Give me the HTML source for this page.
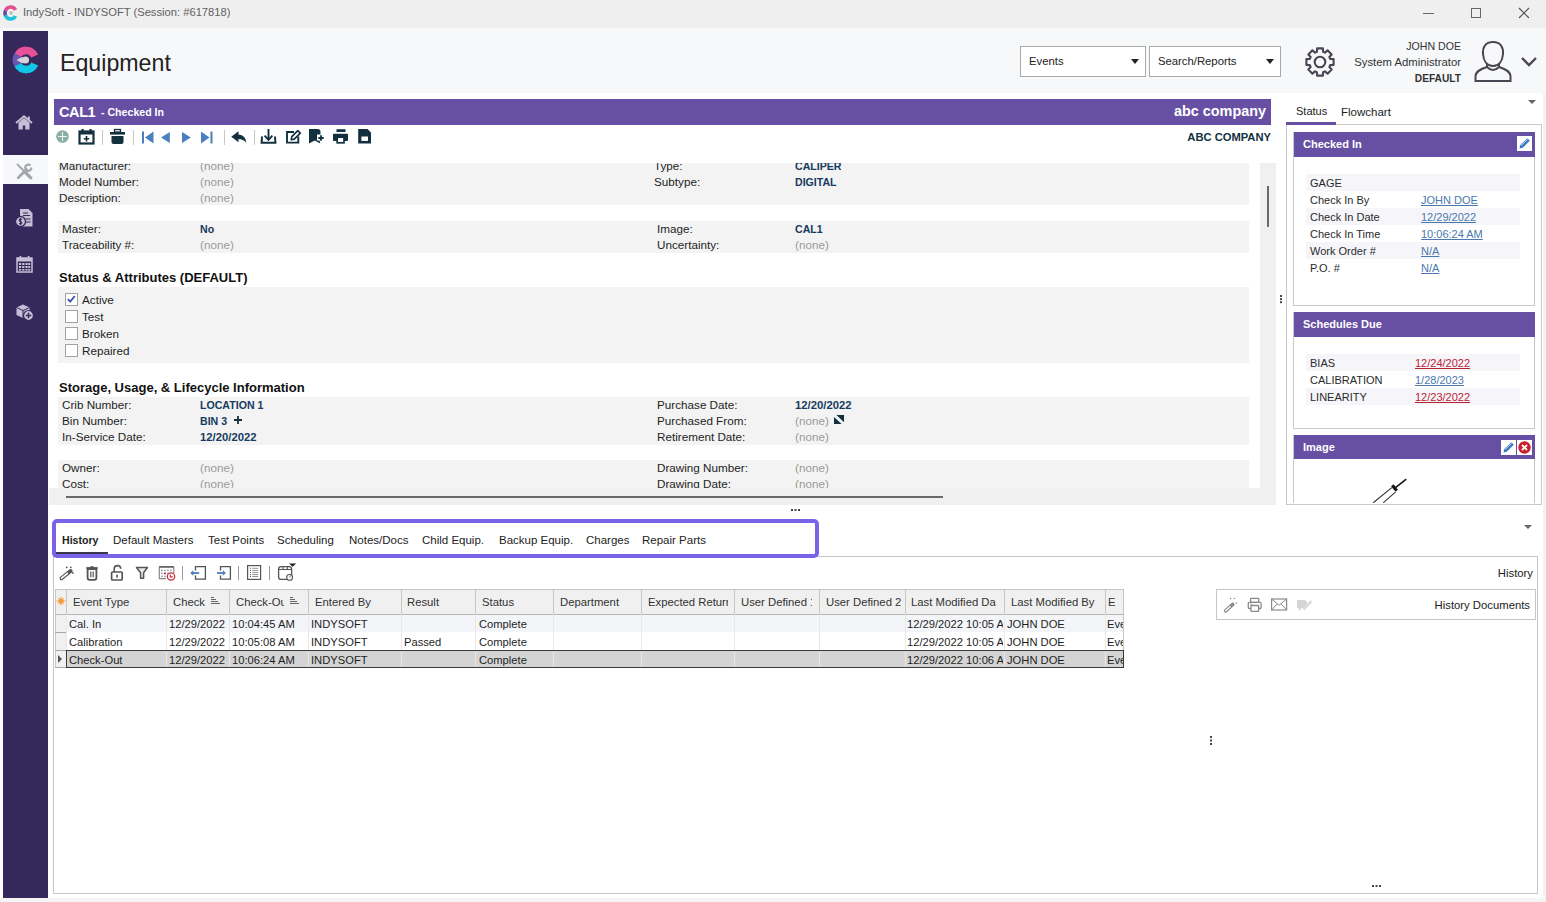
<!DOCTYPE html>
<html><head><meta charset="utf-8">
<style>
*{box-sizing:border-box;margin:0;padding:0}
html,body{width:1546px;height:902px;overflow:hidden;background:#fff;font-family:"Liberation Sans",sans-serif;font-size:12px;color:#1e1e1e;letter-spacing:0}
.a{position:absolute;white-space:nowrap}
.dd{background:#fff;border:1px solid #a9a9a9;height:31px}
.dd span{position:absolute;left:8px;top:7.5px;font-size:11.3px;color:#222}
.dd i{position:absolute;right:6px;top:12px;width:0;height:0;border-left:4px solid transparent;border-right:4px solid transparent;border-top:5px solid #222}
.lbl{color:#1e1e1e;font-size:11.7px}
.none{color:#9a9a9a;font-size:11.7px}
.val{color:#173a5e;font-weight:bold;letter-spacing:0;font-size:10.6px;margin-top:1px}
.gbox{background:#f3f3f3}
.dt{font-size:11.3px;margin-top:0.5px}
.cb{width:13px;height:13px;border:1px solid #a2a2a2;background:#fff}
.card{border:1px solid #c9c9c9;background:#fff}
.ch{background:#6750a4;color:#fff;font-weight:bold}
.lk{color:#4a78ae;text-decoration:underline}
.lr{color:#b82230;text-decoration:underline}
.band{background:#f4f5f9}
.gh{color:#333;font-size:11.3px}
.gt{color:#1e1e1e;font-size:11.2px}
</style></head><body>
<div class="a" style="left:0px;top:0px;width:1546px;height:28px;background:#efefef"></div>
<svg class="a" style="left:2px;top:5px" width="16" height="16" viewBox="0 0 16 16">
<path d="M3.5 5.5 A5.5 5.5 0 0 1 13.5 5" stroke="#e0508f" stroke-width="3.6" fill="none"/>
<path d="M3.5 10.5 A5.5 5.5 0 0 1 3.5 5.5" stroke="#5d4a9e" stroke-width="3.6" fill="none"/>
<path d="M13.5 11 A5.5 5.5 0 0 1 3.5 10.5" stroke="#1ec0dc" stroke-width="3.6" fill="none"/>
<circle cx="9" cy="8" r="1.8" fill="#b8b8b8"/></svg>
<div class="a " style="left:23px;top:6px;font-size:11.2px;color:#5f5f5f">IndySoft - INDYSOFT (Session: #617818)</div>
<div class="a" style="left:1423px;top:13px;width:11px;height:1px;background:#666"></div>
<div class="a" style="left:1471px;top:8px;width:10px;height:10px;border:1px solid #666"></div>
<svg class="a" style="left:1518px;top:7px" width="12" height="12" viewBox="0 0 12 12"><path d="M1 1L11 11M11 1L1 11" stroke="#555" stroke-width="1.2"/></svg>
<div class="a" style="left:3px;top:31px;width:45px;height:868px;background:#35295b"></div>
<div class="a" style="left:3px;top:155px;width:45px;height:29px;background:#f7f8fa"></div>
<svg class="a" style="left:12px;top:46px" width="28" height="28" viewBox="0 0 28 28">
<path d="M5.77 9.25 A9.5 9.5 0 0 1 22.7 10" stroke="#e8509a" stroke-width="7.6" fill="none"/>
<path d="M5.77 18.75 A9.5 9.5 0 0 1 5.77 9.25" stroke="#6a55b0" stroke-width="7.6" fill="none"/>
<path d="M22.7 18 A9.5 9.5 0 0 1 5.77 18.75" stroke="#12c6e8" stroke-width="7.6" fill="none"/>
<path d="M4.5 14 Q9 10.4 13.5 10.4 A3.6 3.6 0 0 1 13.5 17.6 Q9 17.6 4.5 14Z" fill="#d6d2da"/></svg>
<svg class="a" style="left:15px;top:115px" width="18" height="15" viewBox="0 0 18 15">
<path d="M1 8 L9 1.2 L17 8" fill="none" stroke="#c4bfd6" stroke-width="1.8" stroke-linejoin="miter"/>
<path d="M3.5 7.5 L9 3 L14.5 7.5 V14.5 H10.2 V10.5 H7.8 V14.5 H3.5Z" fill="#c4bfd6"/>
<rect x="12.8" y="1.5" width="2" height="4" fill="#c4bfd6"/></svg>
<svg class="a" style="left:16px;top:163px" width="17" height="17" viewBox="0 0 17 17">
<path d="M1.5 1.5 L9 9" stroke="#a6a6ae" stroke-width="1.8" stroke-linecap="round"/>
<path d="M9.5 9.5 L14.8 14.8" stroke="#a6a6ae" stroke-width="3.2" stroke-linecap="round"/>
<path d="M2.2 14.8 L10.5 6.5" stroke="#a6a6ae" stroke-width="2.8" stroke-linecap="round"/>
<circle cx="12.3" cy="4.7" r="3.1" fill="none" stroke="#a6a6ae" stroke-width="2.2"/>
<path d="M12.5 4.5 L17 0 V4.5 Z" fill="#f7f8fa"/></svg>
<svg class="a" style="left:15px;top:208px" width="19" height="20" viewBox="0 0 19 20">
<path d="M5 1 H13.5 L17.5 5 V18.5 H5 Z" fill="#c4bfd6"/>
<path d="M8 5 H13 M8 7.5 H15 M10.5 11 H15.5 M10.5 14 H15.5" stroke="#372a5b" stroke-width="1.1"/>
<circle cx="5.5" cy="13.5" r="5" fill="#c4bfd6" stroke="#372a5b" stroke-width="1.3"/>
<path d="M7 11.5 Q5.5 10.5 4.3 11.5 Q3.7 12.8 5.5 13.4 Q7.3 14 6.7 15.3 Q5.5 16.4 4 15.4 M5.5 10 V17" fill="none" stroke="#372a5b" stroke-width="1.1"/></svg>
<svg class="a" style="left:16px;top:255px" width="17" height="18" viewBox="0 0 17 18">
<rect x="1" y="3" width="15" height="14" fill="none" stroke="#c4bfd6" stroke-width="1.5"/>
<rect x="1" y="3" width="15" height="3.5" fill="#c4bfd6"/>
<rect x="3.5" y="1" width="1.8" height="3" fill="#c4bfd6"/><rect x="11.7" y="1" width="1.8" height="3" fill="#c4bfd6"/>
<g fill="#c4bfd6"><rect x="3" y="8" width="2.2" height="2"/><rect x="6.2" y="8" width="2.2" height="2"/><rect x="9.4" y="8" width="2.2" height="2"/><rect x="12.2" y="8" width="2" height="2"/>
<rect x="3" y="11" width="2.2" height="2"/><rect x="6.2" y="11" width="2.2" height="2"/><rect x="9.4" y="11" width="2.2" height="2"/><rect x="12.2" y="11" width="2" height="2"/>
<rect x="3" y="14" width="2.2" height="1.6"/><rect x="6.2" y="14" width="2.2" height="1.6"/><rect x="9.4" y="14" width="2.2" height="1.6"/><rect x="12.2" y="14" width="2" height="1.6"/></g></svg>
<svg class="a" style="left:15px;top:303px" width="19" height="18" viewBox="0 0 19 18">
<path d="M1.5 4.5 L8 1.5 L14.5 4.5 L14.5 12 L8 15 L1.5 12Z" fill="#c4bfd6"/>
<path d="M1.5 4.5 L8 7.5 L14.5 4.5 M8 7.5 V15" fill="none" stroke="#372a5b" stroke-width="1"/>
<circle cx="13.5" cy="12.5" r="5" fill="#c4bfd6" stroke="#372a5b" stroke-width="1.2"/>
<path d="M13.5 9.8 V15.2 M10.8 12.5 H16.2" stroke="#372a5b" stroke-width="1.5"/></svg>
<div class="a" style="left:48px;top:31px;width:1498px;height:62px;background:#f7f8fa"></div>
<div class="a " style="left:60px;top:50px;font-size:23.2px;color:#222;letter-spacing:0">Equipment</div>
<div class="a dd" style="left:1020px;top:46px;width:126px"><span>Events</span><i></i></div>
<div class="a dd" style="left:1149px;top:46px;width:132px"><span>Search/Reports</span><i></i></div>
<svg class="a" style="left:1304px;top:46px" width="32" height="32" viewBox="0 0 32 32">
<path d="M26.14 12.90 L29.60 13.11 L29.60 18.89 L26.14 19.10 L25.36 20.98 L27.66 23.57 L23.57 27.66 L20.98 25.36 L19.10 26.14 L18.89 29.60 L13.11 29.60 L12.90 26.14 L11.02 25.36 L8.43 27.66 L4.34 23.57 L6.64 20.98 L5.86 19.10 L2.40 18.89 L2.40 13.11 L5.86 12.90 L6.64 11.02 L4.34 8.43 L8.43 4.34 L11.02 6.64 L12.90 5.86 L13.11 2.40 L18.89 2.40 L19.10 5.86 L20.98 6.64 L23.57 4.34 L27.66 8.43 L25.36 11.02Z" fill="none" stroke="#4a4552" stroke-width="2.1" stroke-linejoin="round"/>
<circle cx="16" cy="16" r="5.3" fill="none" stroke="#4a4552" stroke-width="2.1"/></svg>
<div class="a" style="right:85px;top:38px;text-align:right;line-height:16px;color:#333;font-size:11.3px;letter-spacing:0"><span style="font-size:10.6px">JOHN DOE</span><br>System Administrator<br><b style="letter-spacing:0;font-size:10.2px">DEFAULT</b></div>
<svg class="a" style="left:1473px;top:40px" width="40" height="43" viewBox="0 0 40 43">
<path d="M20 2 C12 2 9.5 8 10 14 C10.5 21 14 26 20 26 C26 26 29.5 21 30 14 C30.5 8 28 2 20 2Z" fill="none" stroke="#4a4552" stroke-width="2"/>
<path d="M14 24 L14 27 C8 29 3 31 2.5 36 L2.5 41 H37.5 V36 C37 31 32 29 26 27 L26 24" fill="none" stroke="#4a4552" stroke-width="2"/>
<path d="M14 27 Q20 33 26 27" fill="none" stroke="#4a4552" stroke-width="2"/></svg>
<svg class="a" style="left:1520px;top:56px" width="18" height="11" viewBox="0 0 18 11"><path d="M2 2 L9 9 L16 2" fill="none" stroke="#4a4552" stroke-width="2.4"/></svg>
<div class="a" style="left:54px;top:99px;width:1217px;height:26px;background:#6750a4"></div>
<div class="a " style="left:59px;top:104px;font-size:14.5px;font-weight:bold;color:#fff;letter-spacing:-0.4px">CAL1</div>
<div class="a " style="left:101px;top:106px;font-size:10.6px;font-weight:bold;color:#fff;letter-spacing:0">- Checked In</div>
<div class="a" style="right:280px;top:103px;font-size:14.4px;font-weight:bold;color:#fff;letter-spacing:0">abc company</div>
<div class="a" style="right:275px;top:131px;font-size:11.2px;font-weight:bold;color:#13303f;letter-spacing:0">ABC COMPANY</div>
<svg class="a" style="left:54px;top:127px" width="330" height="20" viewBox="0 0 330 20">
<circle cx="8.5" cy="9.5" r="6.3" fill="#8aaea3"/><path d="M8.5 5 V14 M4 9.5 H13" stroke="#eef3f1" stroke-width="1.1"/>
<rect x="25.5" y="4.5" width="14" height="12" fill="none" stroke="#13303f" stroke-width="2.2"/><rect x="25" y="4" width="15" height="3.5" fill="#13303f"/>
<rect x="27.5" y="2" width="2.2" height="3" fill="#13303f"/><rect x="35.5" y="2" width="2.2" height="3" fill="#13303f"/>
<path d="M32.5 9 V14.5 M29.8 11.8 H35.2" stroke="#13303f" stroke-width="1.6"/>
<rect x="48" y="3" width="1" height="15" fill="#c8c8c8"/>
<rect x="56" y="5" width="15" height="2.6" fill="#13303f"/><rect x="60.5" y="2.5" width="6" height="2.5" fill="none" stroke="#13303f" stroke-width="1.3"/>
<path d="M57.5 9 H69.5 V15 Q69.5 17 67.5 17 H59.5 Q57.5 17 57.5 15Z" fill="#13303f"/>
<rect x="79" y="3" width="1" height="15" fill="#c8c8c8"/>
<rect x="88" y="4.5" width="2" height="12" fill="#4a7fc0"/><path d="M99.5 4.5 V16.5 L91 10.5Z" fill="#4a7fc0"/>
<path d="M115.8 5 V16 L107 10.5Z" fill="#4a7fc0"/>
<path d="M128 5 V16 L136.8 10.5Z" fill="#4a7fc0"/>
<path d="M147 4.5 V16.5 L155.5 10.5Z" fill="#4a7fc0"/><rect x="156.5" y="4.5" width="2" height="12" fill="#4a7fc0"/>
<rect x="170" y="3" width="1" height="15" fill="#c8c8c8"/>
<path d="M177.3 9.8 L184.5 4.3 V7.6 Q191.8 8.3 192.4 15.8 Q189 12.2 184.5 12.1 V15.3 Z" fill="#13303f"/>
<rect x="200" y="3" width="1" height="15" fill="#c8c8c8"/>
<path d="M208 9.5 L207.6 15.8 H221.4 L221 9.5" fill="none" stroke="#13303f" stroke-width="2"/><path d="M214.5 2 V12.5" fill="none" stroke="#13303f" stroke-width="1.9"/><path d="M210.6 8.6 L214.5 12.8 L218.4 8.6" fill="none" stroke="#13303f" stroke-width="1.9"/>
<path d="M240 5 H233 V15.6 H244.3 V9.5" fill="none" stroke="#13303f" stroke-width="1.9"/><path d="M237.2 12.8 L237.8 9.6 L243.8 3.6 L246.3 6.1 L240.3 12.1Z" fill="none" stroke="#13303f" stroke-width="1.6" stroke-linejoin="round"/>
<path d="M255 2 H263.5 Q266.5 2 266.5 5 V7.5 H263 V13.5 H265.5 L266.3 16.6 L260.8 13.5 L255 16.6 Z" fill="#13303f"/><path d="M267 8.3 V13.7 M264.3 11 H269.7" stroke="#13303f" stroke-width="1.8"/>
<rect x="282.5" y="2.2" width="9" height="2.8" fill="#13303f"/><rect x="279" y="6.8" width="15" height="7.2" rx="0.8" fill="#13303f"/><rect x="283.2" y="10.2" width="6.8" height="5.6" fill="#fff" stroke="#13303f" stroke-width="1.7"/>
<path d="M304.2 2 H313.5 L317 5.5 V16.6 H304.2 Z" fill="#13303f"/><rect x="307.4" y="9.5" width="6.6" height="4.4" fill="#fff"/>
</svg>
<div class="a" style="left:54px;top:163px;width:1206px;height:325px;overflow:hidden">
<div class="a gbox" style="left:4px;top:-13px;width:1191px;height:55px"></div>
<div class="a gbox" style="left:4px;top:58px;width:1191px;height:32px"></div>
<div class="a gbox" style="left:4px;top:124px;width:1191px;height:76px"></div>
<div class="a gbox" style="left:4px;top:234px;width:1191px;height:48px"></div>
<div class="a gbox" style="left:4px;top:297px;width:1191px;height:40px"></div>
<div class="a lbl" style="left:5px;top:-4px">Manufacturer:</div>
<div class="a none" style="left:146px;top:-4px">(none)</div>
<div class="a lbl" style="left:600px;top:-4px">Type:</div>
<div class="a val" style="left:741px;top:-4px">CALIPER</div>
<div class="a lbl" style="left:5px;top:12px">Model Number:</div>
<div class="a none" style="left:146px;top:12px">(none)</div>
<div class="a lbl" style="left:600px;top:12px">Subtype:</div>
<div class="a val" style="left:741px;top:12px">DIGITAL</div>
<div class="a lbl" style="left:5px;top:28px">Description:</div>
<div class="a none" style="left:146px;top:28px">(none)</div>
<div class="a lbl" style="left:8px;top:59px">Master:</div>
<div class="a val" style="left:146px;top:59px">No</div>
<div class="a lbl" style="left:603px;top:59px">Image:</div>
<div class="a val" style="left:741px;top:59px">CAL1</div>
<div class="a lbl" style="left:8px;top:75px">Traceability #:</div>
<div class="a none" style="left:146px;top:75px">(none)</div>
<div class="a lbl" style="left:603px;top:75px">Uncertainty:</div>
<div class="a none" style="left:741px;top:75px">(none)</div>
<div class="a" style="left:5px;top:107px;font-size:13px;font-weight:bold;color:#111;letter-spacing:0">Status &amp; Attributes (DEFAULT)</div>
<div class="a cb" style="left:11px;top:130px"></div>
<svg class="a" style="left:11px;top:130px" width="12" height="12" viewBox="0 0 12 12"><path d="M2.8 6.2 L5.2 8.6 L9.8 3" fill="none" stroke="#3d55a8" stroke-width="1.8"/></svg>
<div class="a lbl" style="left:28px;top:130.2px">Active</div>
<div class="a cb" style="left:11px;top:147px"></div>
<div class="a lbl" style="left:28px;top:147.2px">Test</div>
<div class="a cb" style="left:11px;top:164px"></div>
<div class="a lbl" style="left:28px;top:164.2px">Broken</div>
<div class="a cb" style="left:11px;top:181px"></div>
<div class="a lbl" style="left:28px;top:181.2px">Repaired</div>
<div class="a" style="left:5px;top:217px;font-size:13px;font-weight:bold;color:#111;letter-spacing:0">Storage, Usage, &amp; Lifecycle Information</div>
<div class="a lbl" style="left:8px;top:235px">Crib Number:</div>
<div class="a val" style="left:146px;top:235px">LOCATION 1</div>
<div class="a lbl" style="left:603px;top:235px">Purchase Date:</div>
<div class="a val dt" style="left:741px;top:235px">12/20/2022</div>
<div class="a lbl" style="left:8px;top:251px">Bin Number:</div>
<div class="a val" style="left:146px;top:251px">BIN 3</div>
<div class="a lbl" style="left:603px;top:251px">Purchased From:</div>
<div class="a none" style="left:741px;top:251px">(none)</div>
<div class="a lbl" style="left:8px;top:267px">In-Service Date:</div>
<div class="a val dt" style="left:146px;top:267px">12/20/2022</div>
<div class="a lbl" style="left:603px;top:267px">Retirement Date:</div>
<div class="a none" style="left:741px;top:267px">(none)</div>
<div class="a lbl" style="left:8px;top:298px">Owner:</div>
<div class="a none" style="left:146px;top:298px">(none)</div>
<div class="a lbl" style="left:603px;top:298px">Drawing Number:</div>
<div class="a none" style="left:741px;top:298px">(none)</div>
<div class="a lbl" style="left:8px;top:314px">Cost:</div>
<div class="a none" style="left:146px;top:314px">(none)</div>
<div class="a lbl" style="left:603px;top:314px">Drawing Date:</div>
<div class="a none" style="left:741px;top:314px">(none)</div>
<svg class="a" style="left:179px;top:252px" width="10" height="10" viewBox="0 0 10 10"><path d="M5 1 V9 M1 5 H9" stroke="#13303f" stroke-width="1.8"/></svg>
<svg class="a" style="left:780px;top:252px" width="10" height="9" viewBox="0 0 10 9"><path d="M2.4 0 H10 V7.2Z M0 2 V9 H7.6Z" fill="#13303f"/></svg>
</div>
<div class="a" style="left:1260px;top:163px;width:16px;height:325px;background:#f0f0f0"></div>
<div class="a" style="left:1267px;top:186px;width:2px;height:41px;background:#6a6a6a"></div>
<div class="a" style="left:49px;top:488px;width:1227px;height:17px;background:#f0f0f0"></div>
<div class="a" style="left:66px;top:496px;width:877px;height:2px;background:#6a6a6a"></div>
<svg class="a" style="left:791px;top:509px" width="9" height="2"><rect x="0" y="0" width="2" height="2" fill="#444"/><rect x="3.5" y="0" width="2" height="2" fill="#444"/><rect x="7" y="0" width="2" height="2" fill="#444"/></svg>
<svg class="a" style="left:1280px;top:295px" width="3" height="9"><rect x="0" y="0" width="2" height="2" fill="#4a4a4a"/><rect x="0" y="3.1" width="2" height="2" fill="#4a4a4a"/><rect x="0" y="6.2" width="2" height="2" fill="#4a4a4a"/></svg>
<div class="a" style="left:1543px;top:93px;width:3px;height:809px;background:#f3f3f3"></div>
<div class="a" style="left:1286px;top:124px;width:256px;height:381px;border:1px solid #c9c9c9;border-top-color:#c9c9c9"></div>
<div class="a" style="left:1286px;top:122px;width:50px;height:3px;background:#6750a4"></div>
<div class="a " style="left:1296px;top:105px;font-size:11px;color:#222">Status</div>
<div class="a " style="left:1341px;top:106px;font-size:11.5px;color:#222">Flowchart</div>
<div class="a" style="left:1528px;top:100px;width:0;height:0;border-left:4px solid transparent;border-right:4px solid transparent;border-top:4px solid #666"></div>
<div class="a" style="left:1293px;top:304px"></div>
<div class="a card" style="left:1293px;top:132px;width:242px;height:174px"></div>
<div class="a" style="left:1294px;top:132px;width:241px;height:25px;background:#6750a4"></div>
<div class="a " style="left:1303px;top:138px;font-size:11px;font-weight:bold;color:#fff;letter-spacing:0">Checked In</div>
<div class="a card" style="left:1293px;top:312px;width:242px;height:117px"></div>
<div class="a" style="left:1294px;top:312px;width:241px;height:25px;background:#6750a4"></div>
<div class="a " style="left:1303px;top:318px;font-size:11px;font-weight:bold;color:#fff;letter-spacing:0">Schedules Due</div>
<div class="a" style="left:1286px;top:424px;width:256px;height:79px;overflow:hidden">
<div class="a card" style="left:7px;top:11px;width:242px;height:100px"></div>
<div class="a" style="left:8px;top:11px;width:241px;height:24px;background:#6750a4"></div>
<div class="a " style="left:17px;top:17px;font-size:11px;font-weight:bold;color:#fff">Image</div>
<svg class="a" style="left:86px;top:54px" width="36" height="26" viewBox="0 0 36 26"><path d="M1.2 24.8 L19.8 9.6 M11.2 24.8 L23.4 14.2" stroke="#333" stroke-width="1.1" fill="none"/><path d="M20.3 7.3 L24.7 12.7" stroke="#151515" stroke-width="3.2"/><path d="M23.5 9.6 L34.3 1.2" stroke="#151515" stroke-width="1.6"/></svg>
</div>
<svg class="a" style="left:1517px;top:136px" width="15" height="15" viewBox="0 0 15 15"><rect width="15" height="15" fill="#fff"/><path d="M2.5 12.5 L3.2 9.3 L10.3 2.2 L12.8 4.7 L5.7 11.8Z" fill="#3a78c2"/><path d="M4.2 9.6 L10.6 3.2" stroke="#fff" stroke-width="0.7"/></svg>
<svg class="a" style="left:1501px;top:440px" width="15" height="15" viewBox="0 0 15 15"><rect width="15" height="15" fill="#fff"/><path d="M2.5 12.5 L3.2 9.3 L10.3 2.2 L12.8 4.7 L5.7 11.8Z" fill="#3a78c2"/><path d="M4.2 9.6 L10.6 3.2" stroke="#fff" stroke-width="0.7"/></svg>
<svg class="a" style="left:1517px;top:440px" width="15" height="15" viewBox="0 0 15 15"><rect width="15" height="15" fill="#fff"/><circle cx="7.5" cy="7.5" r="6.2" fill="#c8202a"/><path d="M5 5 L10 10 M10 5 L5 10" stroke="#fff" stroke-width="1.8"/></svg>
<div class="a" style="left:1306px;top:174px;width:214px;height:17px;background:#f6f6fa"></div>
<div class="a " style="left:1310px;top:176.5px;font-size:11px;color:#2a2a2a">GAGE</div>
<div class="a " style="left:1310px;top:193.5px;font-size:11px;color:#2a2a2a">Check In By</div>
<div class="a lk" style="left:1421px;top:193.5px;font-size:11px">JOHN DOE</div>
<div class="a" style="left:1306px;top:208px;width:214px;height:17px;background:#f6f6fa"></div>
<div class="a " style="left:1310px;top:210.5px;font-size:11px;color:#2a2a2a">Check In Date</div>
<div class="a lk" style="left:1421px;top:210.5px;font-size:11px">12/29/2022</div>
<div class="a " style="left:1310px;top:227.5px;font-size:11px;color:#2a2a2a">Check In Time</div>
<div class="a lk" style="left:1421px;top:227.5px;font-size:11px">10:06:24 AM</div>
<div class="a" style="left:1306px;top:242px;width:214px;height:17px;background:#f6f6fa"></div>
<div class="a " style="left:1310px;top:244.5px;font-size:11px;color:#2a2a2a">Work Order #</div>
<div class="a lk" style="left:1421px;top:244.5px;font-size:11px">N/A</div>
<div class="a " style="left:1310px;top:261.5px;font-size:11px;color:#2a2a2a">P.O. #</div>
<div class="a lk" style="left:1421px;top:261.5px;font-size:11px">N/A</div>
<div class="a" style="left:1306px;top:354px;width:214px;height:17px;background:#f6f6fa"></div>
<div class="a " style="left:1310px;top:356.5px;font-size:11px;color:#2a2a2a">BIAS</div>
<div class="a lr" style="left:1415px;top:356.5px;font-size:11px">12/24/2022</div>
<div class="a " style="left:1310px;top:373.5px;font-size:11px;color:#2a2a2a">CALIBRATION</div>
<div class="a lk" style="left:1415px;top:373.5px;font-size:11px">1/28/2023</div>
<div class="a" style="left:1306px;top:388px;width:214px;height:17px;background:#f6f6fa"></div>
<div class="a " style="left:1310px;top:390.5px;font-size:11px;color:#2a2a2a">LINEARITY</div>
<div class="a lr" style="left:1415px;top:390.5px;font-size:11px">12/23/2022</div>
<div class="a" style="left:1524px;top:525px;width:0;height:0;border-left:4px solid transparent;border-right:4px solid transparent;border-top:4px solid #666"></div>
<div class="a" style="left:53px;top:556px;width:1485px;height:338px;border:1px solid #c6c6c6"></div>
<div class="a" style="left:52px;top:519px;width:767px;height:39px;border:4px solid #7a63e6;border-radius:5px;background:#fff"></div>
<div class="a" style="left:56px;top:552px;width:52px;height:2px;background:#3b3650"></div>
<div class="a " style="left:62px;top:534px;font-size:10.6px;font-weight:bold;color:#222">History</div>
<div class="a " style="left:113px;top:534px;font-size:11.5px;color:#222">Default Masters</div>
<div class="a " style="left:208px;top:534px;font-size:11.5px;color:#222">Test Points</div>
<div class="a " style="left:277px;top:534px;font-size:11.5px;color:#222">Scheduling</div>
<div class="a " style="left:349px;top:534px;font-size:11.5px;color:#222">Notes/Docs</div>
<div class="a " style="left:422px;top:534px;font-size:11.5px;color:#222">Child Equip.</div>
<div class="a " style="left:499px;top:534px;font-size:11.5px;color:#222">Backup Equip.</div>
<div class="a " style="left:586px;top:534px;font-size:11.5px;color:#222">Charges</div>
<div class="a " style="left:642px;top:534px;font-size:11.5px;color:#222">Repair Parts</div>
<div class="a " style="left:1492px;top:566.5px;font-size:11.3px;color:#222;right:13px;left:auto">History</div>
<svg class="a" style="left:56px;top:563px" width="245" height="20" viewBox="0 0 245 20">
<path d="M5.5 15.2 L14.6 8" stroke="#555" stroke-width="4" stroke-linecap="round"/><path d="M5.5 15.2 L11.5 10.4" stroke="#fff" stroke-width="1.6" stroke-linecap="round"/>
<circle cx="10.7" cy="4.3" r="0.9" fill="#555"/><circle cx="14.8" cy="4.3" r="0.9" fill="#555"/><circle cx="16.9" cy="9.9" r="0.9" fill="#555"/>
<path d="M30.3 5 H41.7" stroke="#555" stroke-width="1.8"/><path d="M33.8 5 Q34.2 3 36 3 Q37.8 3 38.2 5" fill="#555"/>
<path d="M31.6 6 H40.4 V14.8 Q40.4 16.8 38.4 16.8 H33.6 Q31.6 16.8 31.6 14.8Z" fill="none" stroke="#555" stroke-width="1.8"/><path d="M34.8 8.5 V14.3 M37.2 8.5 V14.3" stroke="#555" stroke-width="1.2"/>
<rect x="55.6" y="9" width="10.6" height="8" rx="1" fill="none" stroke="#555" stroke-width="1.7"/><path d="M58.2 9 V6 Q58.2 2.6 61.6 2.6 Q64.6 2.6 64.8 5.8" fill="none" stroke="#555" stroke-width="1.6"/><rect x="60.2" y="11.6" width="1.6" height="3" fill="#555"/>
<path d="M80.5 4.5 H91.5 L87.6 9.8 V15.2 H84.6 V9.8Z" fill="#e8e8ee" stroke="#555" stroke-width="1.5" stroke-linejoin="round"/>
<rect x="103" y="3" width="15" height="1.8" fill="#666"/><path d="M103.3 4 V15.6 H110" fill="none" stroke="#888" stroke-width="1.2"/><path d="M117.8 4 V10" stroke="#888" stroke-width="1.2"/>
<g fill="#aaa"><rect x="105" y="6.6" width="1.8" height="1.6"/><rect x="108" y="6.6" width="1.8" height="1.6"/><rect x="111" y="6.6" width="1.8" height="1.6"/><rect x="114" y="6.6" width="1.8" height="1.6"/>
<rect x="105" y="9.6" width="1.8" height="1.6"/><rect x="108" y="9.6" width="1.8" height="1.6" fill="#6a2a3a"/><rect x="111" y="9.6" width="1.8" height="1.6"/>
<rect x="105" y="12.6" width="1.8" height="1.6"/><rect x="108" y="12.6" width="1.8" height="1.6"/></g>
<circle cx="115" cy="13.5" r="3.7" fill="#fff" stroke="#c8303a" stroke-width="1.3"/><path d="M114.3 11.6 V13.9 H116.8" stroke="#c8303a" stroke-width="1.1" fill="none"/>
<rect x="126" y="3" width="1" height="14" fill="#999"/>
<path d="M139.5 7.5 V3.6 H149.4 V16.2 H139.5 V12.5" fill="none" stroke="#555" stroke-width="1.3"/><path d="M143.2 10 H136.5" stroke="#4a80b8" stroke-width="1.8"/><path d="M134.2 10 L137.4 7.2 V12.8Z" fill="#4a80b8"/>
<path d="M164.5 7.5 V3.6 H174.4 V16.2 H164.5 V12.5" fill="none" stroke="#555" stroke-width="1.3"/><path d="M161 10 H167.5" stroke="#4a80b8" stroke-width="1.8"/><path d="M170 10 L166.8 7.2 V12.8Z" fill="#4a80b8"/>
<rect x="182" y="3" width="1" height="14" fill="#999"/>
<rect x="191.6" y="2.6" width="13" height="13.8" fill="none" stroke="#555" stroke-width="1.2"/>
<g fill="#555"><rect x="194" y="4.8" width="1" height="1"/><rect x="194" y="7" width="1" height="1"/><rect x="194" y="9.1" width="1" height="1"/><rect x="194" y="11.1" width="1" height="1"/><rect x="194" y="13" width="1" height="1"/></g>
<path d="M196.2 5.3 H202.2 M196.2 7.5 H202.2 M196.2 9.6 H202.2 M196.2 11.6 H202.2 M196.2 13.5 H202.2" stroke="#888" stroke-width="0.9"/>
<rect x="213" y="3" width="1" height="14" fill="#999"/>
<rect x="222.6" y="3.6" width="13" height="12.8" rx="2.5" fill="none" stroke="#555" stroke-width="1.3"/><path d="M222.6 6.5 H235.6 M227 3.6 V6.5 M231.3 3.6 V6.5" stroke="#555" stroke-width="1.1"/>
<circle cx="233.6" cy="14.4" r="2.9" fill="#fff" stroke="#555" stroke-width="1.1"/><path d="M233.6 14.4 L234.4 12.6" stroke="#555" stroke-width="0.8"/>
<path d="M233 0.4 H240.2 L236.6 3.8Z" fill="#222"/>
</svg>
<div class="a" style="left:55px;top:589px;width:1069px;height:25px;background:#f0f0f0"></div>
<div class="a" style="left:55px;top:614px;width:1069px;height:18px;background:#f4f5f9"></div>
<div class="a" style="left:55px;top:632px;width:1069px;height:18px;background:#fff"></div>
<div class="a" style="left:55px;top:650px;width:1069px;height:18px;background:#d4d4d4"></div>
<div class="a" style="left:55px;top:589px;width:11px;height:79px;background:#f0f0f0"></div>
<div class="a" style="left:55px;top:589px;width:1069px;height:79px;border:1px solid #c6c6c6;border-bottom:none"></div>
<div class="a" style="left:55px;top:614px;width:1069px;height:1px;background:#b8b8b8"></div>
<div class="a" style="left:66px;top:589px;width:1px;height:25px;background:#c6c6c6"></div>
<div class="a" style="left:66px;top:614px;width:1px;height:54px;background:#e8e8e8"></div>
<div class="a" style="left:166px;top:589px;width:1px;height:25px;background:#c6c6c6"></div>
<div class="a" style="left:166px;top:614px;width:1px;height:54px;background:#e8e8e8"></div>
<div class="a" style="left:229px;top:589px;width:1px;height:25px;background:#c6c6c6"></div>
<div class="a" style="left:229px;top:614px;width:1px;height:54px;background:#e8e8e8"></div>
<div class="a" style="left:308px;top:589px;width:1px;height:25px;background:#c6c6c6"></div>
<div class="a" style="left:308px;top:614px;width:1px;height:54px;background:#e8e8e8"></div>
<div class="a" style="left:401px;top:589px;width:1px;height:25px;background:#c6c6c6"></div>
<div class="a" style="left:401px;top:614px;width:1px;height:54px;background:#e8e8e8"></div>
<div class="a" style="left:475px;top:589px;width:1px;height:25px;background:#c6c6c6"></div>
<div class="a" style="left:475px;top:614px;width:1px;height:54px;background:#e8e8e8"></div>
<div class="a" style="left:553px;top:589px;width:1px;height:25px;background:#c6c6c6"></div>
<div class="a" style="left:553px;top:614px;width:1px;height:54px;background:#e8e8e8"></div>
<div class="a" style="left:641px;top:589px;width:1px;height:25px;background:#c6c6c6"></div>
<div class="a" style="left:641px;top:614px;width:1px;height:54px;background:#e8e8e8"></div>
<div class="a" style="left:734px;top:589px;width:1px;height:25px;background:#c6c6c6"></div>
<div class="a" style="left:734px;top:614px;width:1px;height:54px;background:#e8e8e8"></div>
<div class="a" style="left:819px;top:589px;width:1px;height:25px;background:#c6c6c6"></div>
<div class="a" style="left:819px;top:614px;width:1px;height:54px;background:#e8e8e8"></div>
<div class="a" style="left:905px;top:589px;width:1px;height:25px;background:#c6c6c6"></div>
<div class="a" style="left:905px;top:614px;width:1px;height:54px;background:#e8e8e8"></div>
<div class="a" style="left:1004px;top:589px;width:1px;height:25px;background:#c6c6c6"></div>
<div class="a" style="left:1004px;top:614px;width:1px;height:54px;background:#e8e8e8"></div>
<div class="a" style="left:1105px;top:589px;width:1px;height:25px;background:#c6c6c6"></div>
<div class="a" style="left:1105px;top:614px;width:1px;height:54px;background:#e8e8e8"></div>
<div class="a" style="left:55px;top:632px;width:11px;height:1px;background:#a8a8a8"></div>
<div class="a" style="left:55px;top:650px;width:11px;height:1px;background:#a8a8a8"></div>
<div class="a" style="left:55px;top:667px;width:11px;height:1px;background:#a8a8a8"></div>
<div class="a" style="left:66px;top:650px;width:1058px;height:18px;border:1px solid #3a3a3a;border-top-width:1.5px;border-bottom-width:1.5px"></div>
<svg class="a" style="left:58px;top:655px" width="5" height="8"><path d="M0 0 L4 4 L0 8Z" fill="#555"/></svg>
<svg class="a" style="left:56px;top:596px" width="10" height="10" viewBox="0 0 10 10"><circle cx="5" cy="5" r="2.6" fill="#f39a3a"/><path d="M5 0.5 V9.5 M0.5 5 H9.5 M1.8 1.8 L8.2 8.2 M8.2 1.8 L1.8 8.2" stroke="#f39a3a" stroke-width="0.9"/></svg>
<div class="a gh" style="left:73px;top:595.6px;width:91px;overflow:hidden">Event Type</div>
<div class="a gh" style="left:173px;top:595.6px;width:36px;overflow:hidden">Check</div>
<div class="a gh" style="left:236px;top:595.6px;width:48px;overflow:hidden">Check-Out</div>
<div class="a gh" style="left:315px;top:595.6px;width:84px;overflow:hidden">Entered By</div>
<div class="a gh" style="left:407px;top:595.6px;width:66px;overflow:hidden">Result</div>
<div class="a gh" style="left:482px;top:595.6px;width:69px;overflow:hidden">Status</div>
<div class="a gh" style="left:560px;top:595.6px;width:79px;overflow:hidden">Department</div>
<div class="a gh" style="left:648px;top:595.6px;width:80px;overflow:hidden">Expected Returr</div>
<div class="a gh" style="left:741px;top:595.6px;width:71px;overflow:hidden">User Defined 1</div>
<div class="a gh" style="left:826px;top:595.6px;width:76px;overflow:hidden">User Defined 2</div>
<div class="a gh" style="left:911px;top:595.6px;width:88px;overflow:hidden">Last Modified Da</div>
<div class="a gh" style="left:1011px;top:595.6px;width:92px;overflow:hidden">Last Modified By</div>
<div class="a gh" style="left:1108px;top:595.6px;width:14px;overflow:hidden">E</div>
<svg class="a" style="left:211px;top:597px" width="9" height="8"><path d="M0 0.5 H3 M0 2.5 H5 M0 4.5 H7 M0 6.5 H9" stroke="#666" stroke-width="1"/></svg>
<svg class="a" style="left:290px;top:597px" width="9" height="8"><path d="M0 0.5 H3 M0 2.5 H5 M0 4.5 H7 M0 6.5 H9" stroke="#666" stroke-width="1"/></svg>
<div class="a gt" style="left:69px;top:618.4px;width:96px;overflow:hidden">Cal. In</div>
<div class="a gt" style="left:169px;top:618.4px;width:59px;overflow:hidden">12/29/2022</div>
<div class="a gt" style="left:232px;top:618.4px;width:75px;overflow:hidden">10:04:45 AM</div>
<div class="a gt" style="left:311px;top:618.4px;width:89px;overflow:hidden">INDYSOFT</div>
<div class="a gt" style="left:479px;top:618.4px;width:73px;overflow:hidden">Complete</div>
<div class="a gt" style="left:907px;top:618.4px;width:96px;overflow:hidden">12/29/2022 10:05 A</div>
<div class="a gt" style="left:1007px;top:618.4px;width:97px;overflow:hidden">JOHN DOE</div>
<div class="a gt" style="left:1107px;top:618.4px;width:16px;overflow:hidden">Eve</div>
<div class="a gt" style="left:69px;top:636.4px;width:96px;overflow:hidden">Calibration</div>
<div class="a gt" style="left:169px;top:636.4px;width:59px;overflow:hidden">12/29/2022</div>
<div class="a gt" style="left:232px;top:636.4px;width:75px;overflow:hidden">10:05:08 AM</div>
<div class="a gt" style="left:311px;top:636.4px;width:89px;overflow:hidden">INDYSOFT</div>
<div class="a gt" style="left:404px;top:636.4px;width:70px;overflow:hidden">Passed</div>
<div class="a gt" style="left:479px;top:636.4px;width:73px;overflow:hidden">Complete</div>
<div class="a gt" style="left:907px;top:636.4px;width:96px;overflow:hidden">12/29/2022 10:05 A</div>
<div class="a gt" style="left:1007px;top:636.4px;width:97px;overflow:hidden">JOHN DOE</div>
<div class="a gt" style="left:1107px;top:636.4px;width:16px;overflow:hidden">Eve</div>
<div class="a gt" style="left:69px;top:654.4px;width:96px;overflow:hidden">Check-Out</div>
<div class="a gt" style="left:169px;top:654.4px;width:59px;overflow:hidden">12/29/2022</div>
<div class="a gt" style="left:232px;top:654.4px;width:75px;overflow:hidden">10:06:24 AM</div>
<div class="a gt" style="left:311px;top:654.4px;width:89px;overflow:hidden">INDYSOFT</div>
<div class="a gt" style="left:479px;top:654.4px;width:73px;overflow:hidden">Complete</div>
<div class="a gt" style="left:907px;top:654.4px;width:96px;overflow:hidden">12/29/2022 10:06 A</div>
<div class="a gt" style="left:1007px;top:654.4px;width:97px;overflow:hidden">JOHN DOE</div>
<div class="a gt" style="left:1107px;top:654.4px;width:16px;overflow:hidden">Eve</div>
<div class="a" style="left:1216px;top:589px;width:320px;height:31px;border:1px solid #c6c6c6"></div>
<div class="a " style="left:1433px;top:598.5px;font-size:11.3px;color:#222;right:16px;left:auto">History Documents</div>
<svg class="a" style="left:1222px;top:596px" width="95" height="18" viewBox="0 0 95 18">
<path d="M3.6 14.8 L10.8 8.4" stroke="#8a8a8a" stroke-width="3.6" stroke-linecap="round"/><path d="M3.6 14.8 L8.2 10.7" stroke="#fff" stroke-width="1.4" stroke-linecap="round"/>
<circle cx="8.6" cy="2.5" r="0.8" fill="#8a8a8a"/><circle cx="12.4" cy="2.5" r="0.8" fill="#8a8a8a"/><circle cx="14.4" cy="7" r="0.8" fill="#8a8a8a"/>
<rect x="28.6" y="2.3" width="8.2" height="4" rx="0.6" fill="none" stroke="#8a8a8a" stroke-width="1.3"/><rect x="26.3" y="6.3" width="12.8" height="6.2" rx="1" fill="none" stroke="#8a8a8a" stroke-width="1.3"/><rect x="29" y="9.5" width="7.6" height="5.8" rx="0.6" fill="#fff" stroke="#8a8a8a" stroke-width="1.3"/><path d="M28.2 8.2 H30.2" stroke="#8a8a8a" stroke-width="0.8"/>
<rect x="49.6" y="3" width="15" height="11" fill="none" stroke="#8a8a8a" stroke-width="1.2"/><path d="M49.6 3 L57.1 9.2 L64.6 3 M49.6 14 L55 8 M64.6 14 L59.2 8" fill="none" stroke="#8a8a8a" stroke-width="1"/>
<path d="M75 4 H83 L85 6 V12 L79.5 12 L77.5 15 L76.5 12 H75Z" fill="#d4d4d4"/><path d="M81.5 13.5 L89.5 5" stroke="#dcdcdc" stroke-width="2.6"/>
</svg>
<svg class="a" style="left:1210px;top:736px" width="3" height="10"><rect x="0" y="0" width="2" height="2" fill="#444"/><rect x="0" y="3.5" width="2" height="2" fill="#444"/><rect x="0" y="7" width="2" height="2" fill="#444"/></svg>
<svg class="a" style="left:1372px;top:885px" width="10" height="3"><rect x="0" y="0" width="2" height="2" fill="#444"/><rect x="3.5" y="0" width="2" height="2" fill="#444"/><rect x="7" y="0" width="2" height="2" fill="#444"/></svg>
<div class="a" style="left:0px;top:898px;width:1546px;height:4px;background:#f5f5f5"></div>
<div class="a" style="left:0px;top:28px;width:1546px;height:3px;background:#f7f8fa"></div>
</body></html>
